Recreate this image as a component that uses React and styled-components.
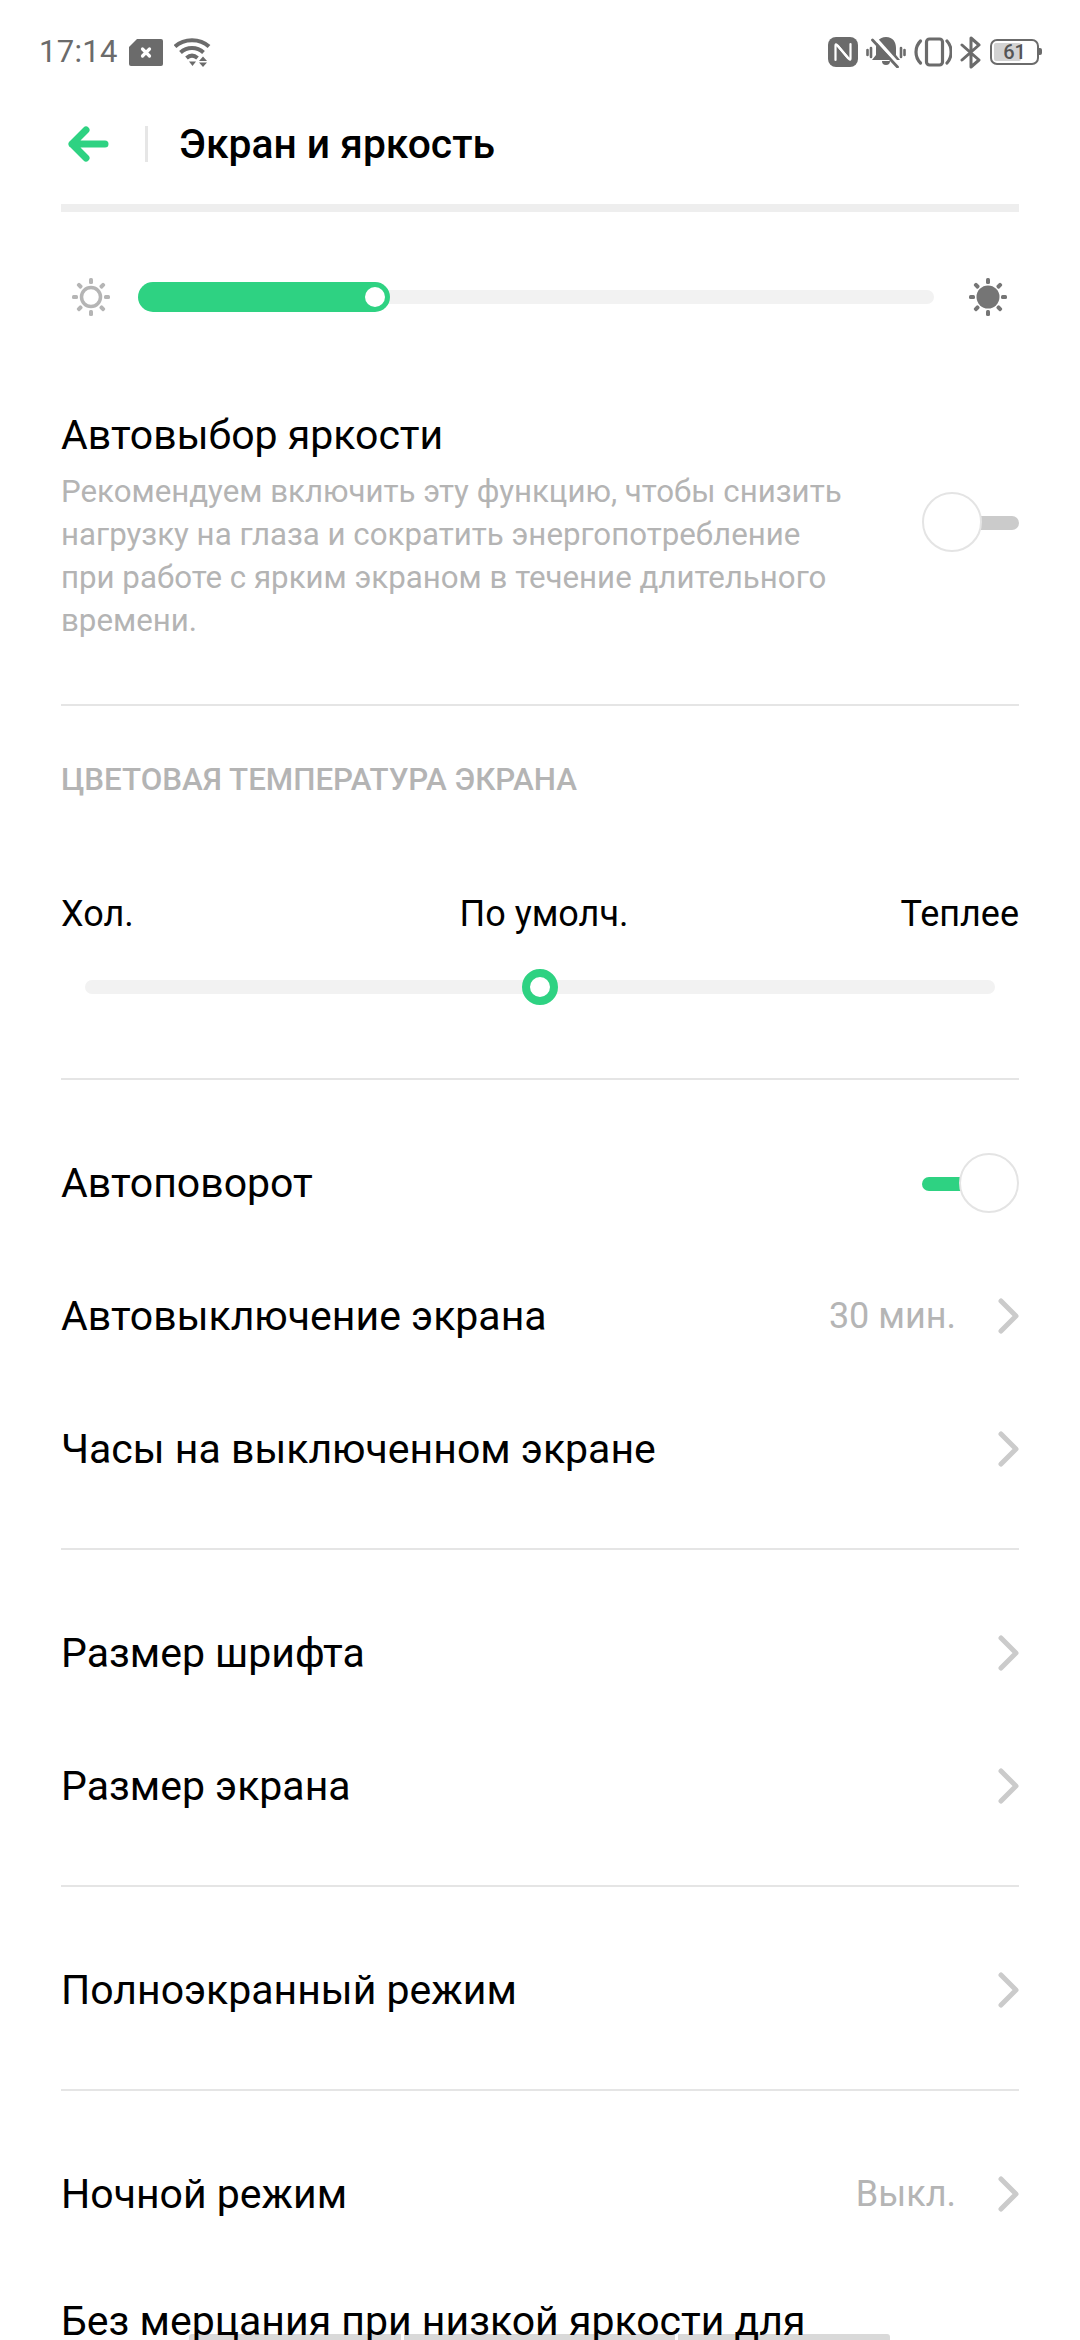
import React from 'react'
import styled, { createGlobalStyle } from 'styled-components'

const GREEN = '#2ed282'

const Global = createGlobalStyle`
  html, body {
    margin: 0;
    padding: 0;
    background: #fff;
  }
  body {
    font-family: Roboto, "Noto Sans", sans-serif;
  }
`

const Screen = styled.div`
  position: relative;
  width: 1080px;
  height: 2340px;
  overflow: hidden;
  background: #fff;
  color: #000;
`

const StatusBar = styled.div`
  display: flex;
  align-items: center;
  justify-content: space-between;
  height: 36px;
  padding: 34px 38px 0 39px;
  color: #6b6b6b;
`

const StatusGroup = styled.div`
  display: flex;
  align-items: center;
  gap: ${(p) => p.$gap || 8}px;
`

const Time = styled.span`
  font-size: 31px;
  line-height: 36px;
  letter-spacing: 0.3px;
`

const BatteryBox = styled.div`
  position: relative;
  width: 49px;
  height: 26px;
  box-sizing: border-box;
  border: 2.5px solid #6b6b6b;
  border-radius: 7px;
  margin-right: 3px;
  display: flex;
  align-items: center;
  justify-content: center;
  &::before {
    content: '';
    position: absolute;
    left: 2px;
    top: 2px;
    bottom: 2px;
    width: 59%;
    background: #d3d3d3;
    border-radius: 2px;
  }
  &::after {
    content: '';
    position: absolute;
    right: -5px;
    top: 7px;
    width: 3px;
    height: 7px;
    background: #6b6b6b;
    border-radius: 0 2px 2px 0;
  }
`

const BatteryLevel = styled.span`
  position: relative;
  font-size: 20px;
  font-weight: 500;
  line-height: 1;
  color: #555;
`

const Header = styled.div`
  display: flex;
  align-items: center;
  height: 60px;
  margin-top: 44px;
  padding-left: 67px;
`

const Divider = styled.div`
  width: 3px;
  height: 36px;
  background: #e6e6e6;
  margin: 0 31px 0 36px;
`

const Title = styled.h1`
  margin: 0;
  font-size: 40.8px;
  font-weight: 500;
  line-height: 60px;
`

const Body = styled.div`
  position: relative;
  padding: 0 0 0 61px;
  width: 958px;
`

const TopRule = styled.div`
  height: 8px;
  background: #eeeeee;
  margin-top: 30px;
`

const BrightnessRow = styled.div`
  display: flex;
  align-items: center;
  height: 40px;
  margin-top: 65px;
`

const SunSlot = styled.div`
  flex: none;
  width: 40px;
  height: 40px;
  margin: ${(p) => p.$margin};
`

const BrightTrack = styled.div`
  position: relative;
  flex: 1;
  height: 14px;
  background: #f2f2f2;
  border-radius: 7px;
`

const BrightFill = styled.div`
  position: absolute;
  left: 0;
  top: -8px;
  height: 30px;
  background: ${GREEN};
  border-radius: 15px;
  &::after {
    content: '';
    position: absolute;
    right: 5px;
    top: 5px;
    width: 20px;
    height: 20px;
    border-radius: 50%;
    background: #fff;
  }
`

const AutoBlock = styled.div`
  display: flex;
  align-items: center;
  justify-content: space-between;
  padding: 94px 0 62px;
  border-bottom: 2px solid #e5e5e5;
`

const AutoText = styled.div`
  width: 800px;
`

const RowLabel = styled.div`
  font-size: 41px;
  line-height: 48px;
  white-space: nowrap;
`

const Hint = styled.div`
  margin-top: 11px;
  font-size: 31.25px;
  line-height: 43px;
  color: #b4b4b4;
  white-space: nowrap;
`

const SectionLabel = styled.div`
  font-size: 31.3px;
  line-height: 36px;
  font-weight: 500;
  color: #b4b4b4;
  margin-top: 56px;
`

const TempLabels = styled.div`
  display: grid;
  grid-template-columns: 1fr auto 1fr;
  margin-top: 96px;
  font-size: 36px;
  line-height: 40px;
`

const TempLabel = styled.span`
  text-align: ${(p) => p.$align || 'left'};
  margin-left: ${(p) => p.$shift || 0}px;
`

const TempTrack = styled.div`
  position: relative;
  height: 14px;
  margin: 46px 24px 0;
  background: #f2f2f2;
  border-radius: 7px;
`

const TempThumb = styled.div`
  position: absolute;
  left: 50%;
  top: 50%;
  width: 36px;
  height: 36px;
  box-sizing: border-box;
  transform: translate(-50%, -50%);
  border: 8px solid ${GREEN};
  border-radius: 50%;
  background: #fff;
`

const Section = styled.div`
  padding: ${(p) => p.$pad || '0'};
  border-bottom: ${(p) => (p.$last ? 'none' : '2px solid #e5e5e5')};
`

const Row = styled.div`
  display: flex;
  align-items: center;
  height: 133px;
`

const WrapRow = styled.div`
  height: 133px;
  padding-top: 37px;
  box-sizing: border-box;
`

const RowValue = styled.span`
  margin-left: auto;
  margin-right: 42px;
  font-size: 36px;
  color: #b5b5b5;
`

const ChevronSlot = styled.svg`
  flex: none;
  width: 22px;
  height: 36px;
  margin-left: ${(p) => (p.$alone ? 'auto' : '0')};
  margin-right: -1px;
`

const SwitchWrap = styled.div`
  position: relative;
  flex: none;
  width: 97px;
  height: 60px;
  margin-left: auto;
  margin-bottom: ${(p) => p.$lift || 0}px;
`

const SwitchBar = styled.div`
  position: absolute;
  top: 24px;
  width: 50px;
  height: 14px;
  background: ${(p) => (p.$on ? GREEN : '#cbcbcb')};
  border-radius: 7px;
  ${(p) => (p.$on ? 'left: 0;' : 'right: 0;')}
`

const SwitchKnob = styled.div`
  position: absolute;
  top: 0;
  width: 60px;
  height: 60px;
  box-sizing: border-box;
  background: #fff;
  border: 2px solid #e4e4e4;
  border-radius: 50%;
  ${(p) => (p.$on ? 'right: 0;' : 'left: 0;')}
`

const NavBar = styled.div`
  position: absolute;
  left: 189px;
  bottom: 0;
  display: flex;
  gap: 3px;
  height: 6px;
`

const NavPiece = styled.div`
  width: ${(p) => p.$w}px;
  background: #d9d9d9;
  &:first-child {
    border-top-left-radius: 3px;
  }
  &:last-child {
    border-top-right-radius: 3px;
  }
`

const Chevron = ({ alone }) => (
  <ChevronSlot $alone={alone} viewBox="0 0 22 36" fill="none" stroke="#cbcbcb" strokeWidth="5" strokeLinecap="round" strokeLinejoin="round">
    <path d="M3 3l15 15L3 33" />
  </ChevronSlot>
)

const Switch = ({ on, lift }) => (
  <SwitchWrap $lift={lift}>
    <SwitchBar $on={on} />
    <SwitchKnob $on={on} />
  </SwitchWrap>
)

const Sun = ({ filled }) => {
  const color = filled ? '#757575' : '#b5b5b5'
  const rays = [0, 45, 90, 135, 180, 225, 270, 315]
  return (
    <svg width="40" height="40" viewBox="0 0 40 40">
      {filled ? (
        <circle cx="20" cy="20" r="11.5" fill={color} />
      ) : (
        <circle cx="20" cy="20" r="9.5" fill="none" stroke={color} strokeWidth="3.5" />
      )}
      {rays.map((r) => (
        <rect key={r} x="18" y="1" width="4" height="6" rx="1.5" fill={color} transform={`rotate(${r} 20 20)`} />
      ))}
    </svg>
  )
}

const SimIcon = () => (
  <svg width="34" height="27" viewBox="0 0 34 27">
    <path d="M8 0h24a2 2 0 0 1 2 2v23a2 2 0 0 1-2 2H2a2 2 0 0 1-2-2V8z" fill="#6b6b6b" />
    <path d="M13.5 10l7 7M20.5 10l-7 7" stroke="#fff" strokeWidth="3.2" strokeLinecap="round" />
  </svg>
)

const WifiIcon = () => (
  <svg width="38" height="30" viewBox="0 0 38 30" fill="none" stroke="#6b6b6b" strokeWidth="4">
    <path d="M1 9.500C10 1 26 1 35 9.500" />
    <path d="M6.500 15.500c6.500-6 16.500-6 23 0" />
    <path d="M12.500 21c3.500-3 7.500-3 11 0" />
    <path d="M15 24.500h7l-3.500 4.500z" fill="#6b6b6b" stroke="none" />
    <path d="M25 24l4-4.500 4 4.500zM25 25.500h8l-4 4.500z" fill="#6b6b6b" stroke="none" />
  </svg>
)

const NfcIcon = () => (
  <svg width="30" height="30" viewBox="0 0 30 30">
    <rect width="30" height="30" rx="8" fill="#6b6b6b" />
    <path d="M7.500 23V8.500q0-2 1.500-.5l11 13" fill="none" stroke="#fff" strokeWidth="2.200" strokeLinecap="round" strokeLinejoin="round" />
    <path d="M22.500 7v14.500q0 2-1.500.5L10 9" fill="none" stroke="#fff" strokeWidth="2.200" strokeLinecap="round" strokeLinejoin="round" />
  </svg>
)

const MuteIcon = () => (
  <svg width="40" height="32" viewBox="0 0 40 32">
    <path d="M20 1c-7 0-10 5-10 11v7l-4 5h28l-4-5v-7c0-6-3-11-10-11z" fill="#6b6b6b" />
    <path d="M16 25h8a4 4 0 0 1-8 0z" fill="#6b6b6b" />
    <path d="M9 2l24 27" stroke="#fff" strokeWidth="3.500" />
    <path d="M6.500 4l25 27" stroke="#6b6b6b" strokeWidth="2.800" strokeLinecap="round" />
    <path d="M1.500 14v5M5 12v9M35 12v9M38.500 14v5" stroke="#6b6b6b" strokeWidth="2.600" strokeLinecap="round" />
  </svg>
)

const RotateIcon = () => (
  <svg width="38" height="32" viewBox="0 0 38 32" fill="none" stroke="#6b6b6b" strokeWidth="3.200">
    <rect x="12.500" y="3" width="16" height="26" rx="3" />
    <path d="M6.500 5C.5 11 .5 21 6.500 27" strokeLinecap="round" />
    <path d="M33 27c5.500-6 5.500-16 0-22" strokeLinecap="round" />
  </svg>
)

const BluetoothIcon = () => (
  <svg width="22" height="33" viewBox="0 0 22 33" fill="none" stroke="#6b6b6b" strokeWidth="3" strokeLinejoin="round" strokeLinecap="round">
    <path d="M2 9l17 15-8 7V2l8 7L2 24" />
  </svg>
)

const BackArrow = () => (
  <svg width="42" height="36" viewBox="0 0 42 36" fill="none" stroke={GREEN} strokeWidth="7" strokeLinecap="round" strokeLinejoin="round">
    <path d="M38 18H5M19 4L5 18l14 14" />
  </svg>
)

const App = () => (
  <Screen>
    <Global />
    <NavBar>
      <NavPiece $w={212} />
      <NavPiece $w={271} />
      <NavPiece $w={212} />
    </NavBar>

    <StatusBar>
      <StatusGroup $gap={11}>
        <Time>17:14</Time>
        <SimIcon />
        <WifiIcon />
      </StatusGroup>
      <StatusGroup $gap={8}>
        <NfcIcon />
        <MuteIcon />
        <RotateIcon />
        <BluetoothIcon />
        <BatteryBox><BatteryLevel>61</BatteryLevel></BatteryBox>
      </StatusGroup>
    </StatusBar>

    <Header>
      <BackArrow />
      <Divider />
      <Title>Экран и яркость</Title>
    </Header>

    <Body>
      <TopRule />
      <BrightnessRow>
        <SunSlot $margin="0 27px 0 10px"><Sun /></SunSlot>
        <BrightTrack>
          <BrightFill style={{ width: 252 }} />
        </BrightTrack>
        <SunSlot $margin="0 11px 0 34px"><Sun filled /></SunSlot>
      </BrightnessRow>

      <AutoBlock>
        <AutoText>
          <RowLabel>Автовыбор яркости</RowLabel>
          <Hint>
            Рекомендуем включить эту функцию, чтобы снизить<br />
            нагрузку на глаза и сократить энергопотребление<br />
            при работе с ярким экраном в течение длительного<br />
            времени.
          </Hint>
        </AutoText>
        <Switch lift={10} />
      </AutoBlock>

      <Section $pad="0 0 84px">
        <SectionLabel>ЦВЕТОВАЯ ТЕМПЕРАТУРА ЭКРАНА</SectionLabel>
        <TempLabels>
          <TempLabel>Хол.</TempLabel>
          <TempLabel $shift={8}>По умолч.</TempLabel>
          <TempLabel $align="right">Теплее</TempLabel>
        </TempLabels>
        <TempTrack><TempThumb /></TempTrack>
      </Section>

      <Section $pad="36px 0 33px">
        <Row>
          <RowLabel>Автоповорот</RowLabel>
          <Switch on />
        </Row>
        <Row>
          <RowLabel>Автовыключение экрана</RowLabel>
          <RowValue>30 мин.</RowValue>
          <Chevron />
        </Row>
        <Row>
          <RowLabel>Часы на выключенном экране</RowLabel>
          <Chevron alone />
        </Row>
      </Section>

      <Section $pad="36px 0 33px">
        <Row>
          <RowLabel>Размер шрифта</RowLabel>
          <Chevron alone />
        </Row>
        <Row>
          <RowLabel>Размер экрана</RowLabel>
          <Chevron alone />
        </Row>
      </Section>

      <Section $pad="36px 0 33px">
        <Row>
          <RowLabel>Полноэкранный режим</RowLabel>
          <Chevron alone />
        </Row>
      </Section>

      <Section $pad="36px 0 0" $last>
        <Row>
          <RowLabel>Ночной режим</RowLabel>
          <RowValue>Выкл.</RowValue>
          <Chevron />
        </Row>
        <WrapRow>
          <RowLabel>Без мерцания при низкой яркости для</RowLabel>
        </WrapRow>
      </Section>
    </Body>
  </Screen>
)

export default App
